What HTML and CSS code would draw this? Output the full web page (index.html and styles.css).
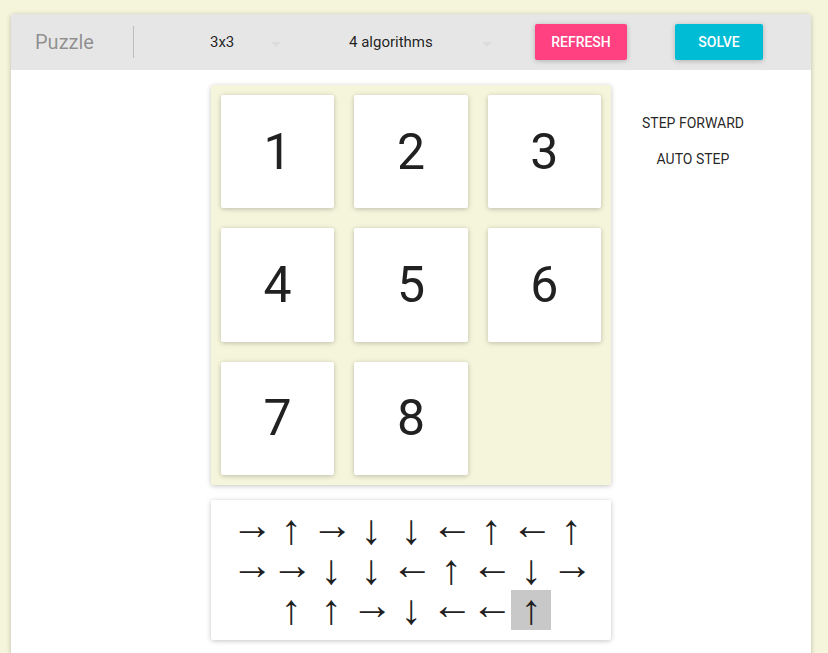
FILE: index.html
```html
<!DOCTYPE html>
<html>
<head>
<meta charset="utf-8">
<link rel="stylesheet" href="styles.css">
</head>
<body>
<div class="app">
  <div class="card">
    <div class="toolbar">
      <div class="title">Puzzle</div>
      <div class="separator"></div>
      <div class="dropdown dd-size">
        <span class="dd-label">3x3</span>
        <svg class="dd-icon" viewBox="0 0 24 24" width="24" height="24"><path d="M7 10l5 5 5-5z"/></svg>
      </div>
      <div class="dropdown dd-algo">
        <span class="dd-label">4 algorithms</span>
        <svg class="dd-icon" viewBox="0 0 24 24" width="24" height="24"><path d="M7 10l5 5 5-5z"/></svg>
      </div>
      <button class="raised refresh">Refresh</button>
      <button class="raised solve">Solve</button>
    </div>
    <div class="content">
      <div class="spacer"></div>
      <div class="main">
        <div class="board">
          <div class="tile">1</div>
          <div class="tile">2</div>
          <div class="tile">3</div>
          <div class="tile">4</div>
          <div class="tile">5</div>
          <div class="tile">6</div>
          <div class="tile">7</div>
          <div class="tile">8</div>
          <div class="empty"></div>
        </div>
        <div class="moves">
          <span class="mv h">→</span><span class="mv">↑</span><span class="mv h">→</span><span class="mv">↓</span><span class="mv">↓</span><span class="mv h">←</span><span class="mv">↑</span><span class="mv h">←</span><span class="mv">↑</span><span class="mv h">→</span><span class="mv h">→</span><span class="mv">↓</span><span class="mv">↓</span><span class="mv h">←</span><span class="mv">↑</span><span class="mv h">←</span><span class="mv">↓</span><span class="mv h">→</span><span class="mv">↑</span><span class="mv">↑</span><span class="mv h">→</span><span class="mv">↓</span><span class="mv h">←</span><span class="mv h">←</span><span class="mv current">↑</span>
        </div>
      </div>
      <div class="side">
        <button class="flat">Step forward</button>
        <button class="flat">Auto step</button>
      </div>
    </div>
  </div>
</div>
</body>
</html>
```
FILE: styles.css
```css
html, body {
  margin: 0;
  padding: 0;
}
body {
  background: #f5f5dc;
  font-family: Roboto, "Noto Sans", sans-serif;
  color: rgba(0, 0, 0, 0.87);
}
.app {
  padding: 14px 0 0 11px;
  height: 653px;
  box-sizing: border-box;
  overflow: hidden;
}
.card {
  width: 800px;
  background: #fff;
  border-radius: 2px;
  box-shadow: 0 1px 6px rgba(0, 0, 0, 0.12), 0 1px 4px rgba(0, 0, 0, 0.12);
  min-height: 700px;
}
.toolbar {
  height: 56px;
  background: #e6e6e6;
  border-radius: 2px 2px 0 0;
  display: flex;
  align-items: center;
  padding: 0 0 0 24px;
}
.title {
  font-size: 20px;
  color: rgba(0, 0, 0, 0.4);
  line-height: 56px;
  width: 98px;
}
.separator {
  width: 1px;
  height: 32px;
  background: #bdbdbd;
}
.dropdown {
  position: relative;
  height: 56px;
  line-height: 56px;
  font-size: 15px;
  color: rgba(0, 0, 0, 0.87);
  box-sizing: border-box;
  padding-left: 24px;
}
.dd-size {
  margin-left: 52px;
  width: 118px;
}
.dd-algo {
  margin-left: 21px;
  width: 190px;
}
.dd-icon {
  position: absolute;
  right: 16px;
  top: 18px;
  fill: #dcdcdc;
}
.raised {
  height: 36px;
  border: none;
  border-radius: 2px;
  color: #fff;
  font-family: Roboto, sans-serif;
  font-weight: 500;
  font-size: 14px;
  text-transform: uppercase;
  box-shadow: 0 1px 6px rgba(0, 0, 0, 0.12), 0 1px 4px rgba(0, 0, 0, 0.12);
  padding: 0 16px;
  min-width: 88px;
}
.refresh {
  background: #ff4081;
  margin-left: 20px;
  width: 92px;
}
.solve {
  background: #00bcd4;
  margin-left: 48px;
  width: 88px;
}
.content {
  display: flex;
  padding-top: 15px;
}
.spacer {
  width: 200px;
}
.main {
  width: 400px;
}
.board {
  width: 400px;
  height: 400px;
  background: #f5f5dc;
  box-shadow: 0 1px 6px rgba(0, 0, 0, 0.12), 0 1px 4px rgba(0, 0, 0, 0.12);
  border-radius: 2px;
  display: grid;
  grid-template-columns: repeat(3, 1fr);
  grid-template-rows: repeat(3, 1fr);
}
.tile, .empty {
  margin: 10px;
  border-radius: 2px;
}
.tile {
  background: #fff;
  box-shadow: 0 1px 6px rgba(0, 0, 0, 0.12), 0 1px 4px rgba(0, 0, 0, 0.12);
  display: flex;
  align-items: center;
  justify-content: center;
  font-size: 50px;
  font-weight: 400;
  color: #212121;
}
.moves {
  margin-top: 15px;
  background: #fff;
  border-radius: 2px;
  box-shadow: 0 1px 6px rgba(0, 0, 0, 0.12), 0 1px 4px rgba(0, 0, 0, 0.12);
  padding: 10px 20px;
  text-align: center;
  line-height: 0;
}
.mv {
  display: inline-block;
  width: 40px;
  height: 40px;
  line-height: 40px;
  font-family: "Liberation Sans", sans-serif;
  font-size: 42px;
  color: #212121;
  vertical-align: top;
}
.mv.h {
  line-height: 30px;
}
.mv.current {
  background: #c8c8c8;
}
.side {
  width: 134px;
  margin-left: 15px;
  padding-top: 20px;
  display: flex;
  flex-direction: column;
  align-items: center;
}
.flat {
  height: 36px;
  border: none;
  background: transparent;
  font-family: Roboto, sans-serif;
  font-size: 14px;
  font-weight: 400;
  white-space: nowrap;
  text-transform: uppercase;
  color: rgba(0, 0, 0, 0.87);
  padding: 0 16px;
}
```
